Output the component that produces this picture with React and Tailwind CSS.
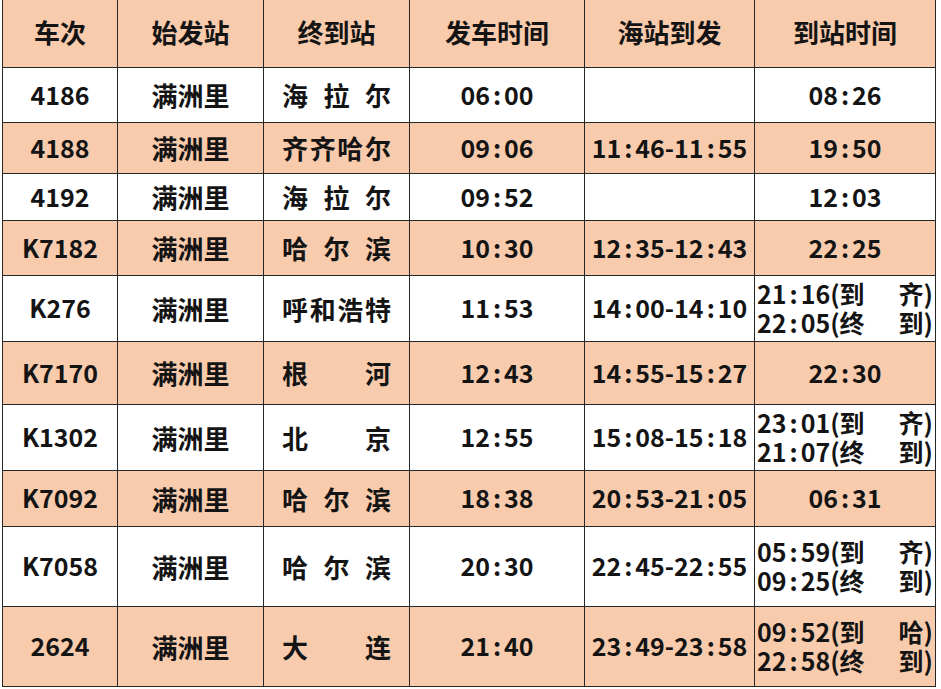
import React from "react";

const headers = ["车次", "始发站", "终到站", "发车时间", "海站到发", "到站时间"];
const widths = ["w-[115px]", "w-[146px]", "w-[146px]", "w-[175px]", "w-[170px]", "w-[181px]"];

// 到站时间: 字符串为单行，数组为两行（左右分散）
const rows = [
  { no: "4186", from: "满洲里", to: ["海", "拉", "尔"], dep: "06:00", hai: "", arr: "08:26", h: "h-[55px]" },
  { no: "4188", from: "满洲里", to: ["齐", "齐", "哈", "尔"], dep: "09:06", hai: "11:46-11:55", arr: "19:50", h: "h-[51px]" },
  { no: "4192", from: "满洲里", to: ["海", "拉", "尔"], dep: "09:52", hai: "", arr: "12:03", h: "h-[47px]" },
  { no: "K7182", from: "满洲里", to: ["哈", "尔", "滨"], dep: "10:30", hai: "12:35-12:43", arr: "22:25", h: "h-[55px]" },
  { no: "K276", from: "满洲里", to: ["呼", "和", "浩", "特"], dep: "11:53", hai: "14:00-14:10", arr: [["21:16(到", "齐)"], ["22:05(终", "到)"]], h: "h-[66px]" },
  { no: "K7170", from: "满洲里", to: ["根", "河"], dep: "12:43", hai: "14:55-15:27", arr: "22:30", h: "h-[63px]" },
  { no: "K1302", from: "满洲里", to: ["北", "京"], dep: "12:55", hai: "15:08-15:18", arr: [["23:01(到", "齐)"], ["21:07(终", "到)"]], h: "h-[66px]" },
  { no: "K7092", from: "满洲里", to: ["哈", "尔", "滨"], dep: "18:38", hai: "20:53-21:05", arr: "06:31", h: "h-[56px]" },
  { no: "K7058", from: "满洲里", to: ["哈", "尔", "滨"], dep: "20:30", hai: "22:45-22:55", arr: [["05:59(到", "齐)"], ["09:25(终", "到)"]], h: "h-[80px]" },
  { no: "2624", from: "满洲里", to: ["大", "连"], dep: "21:40", hai: "23:49-23:58", arr: [["09:52(到", "哈)"], ["22:58(终", "到)"]], h: "h-[80px]" },
];

const cell = "border border-[#262626] p-0 text-center align-middle";

// 冒号两侧留一点空隙，和原表的时间格式一致
function Time({ value }) {
  const parts = value.split(":");
  return (
    <>
      {parts.map((p, i) => (
        <React.Fragment key={i}>
          {i > 0 && <span className="mx-[3px]">:</span>}
          {p}
        </React.Fragment>
      ))}
    </>
  );
}

export default function App() {
  return (
    <div
      className="w-[941px] h-[689px] bg-white overflow-hidden pl-[2px] text-[#141414]"
      style={{ fontFamily: '"Noto Sans CJK SC", "Noto Sans", sans-serif' }}
    >
      <table className="table-fixed border-collapse w-[933px] border-t-0">
        <thead>
          <tr className="h-[67px] bg-[#f8cbad]">
            {headers.map((t, i) => (
              <th key={t} className={`${cell} border-t-0 ${widths[i]} text-[26px] font-bold pb-[4px]`}>
                {t}
              </th>
            ))}
          </tr>
        </thead>
        <tbody>
          {rows.map((r, idx) => (
            <tr key={r.no} className={`${r.h} ${idx % 2 === 1 ? "bg-[#f8cbad]" : "bg-white"}`}>
              <td className={`${cell} text-[25px] font-bold`}>{r.no}</td>
              <td className={`${cell} text-[26px] font-bold`}>{r.from}</td>
              <td className={`${cell} text-[26px] font-bold`}>
                <div className="flex justify-between px-[18px]">
                  {r.to.map((c, i) => (
                    <span key={i}>{c}</span>
                  ))}
                </div>
              </td>
              <td className={`${cell} text-[25px] font-bold`}>
                <Time value={r.dep} />
              </td>
              <td className={`${cell} text-[25px] font-bold`}>{r.hai && <Time value={r.hai} />}</td>
              <td className={`${cell} text-[25px] font-bold`}>
                {Array.isArray(r.arr) ? (
                  <div className="flex flex-col leading-[29px] px-[2px]">
                    {r.arr.map((line, i) => (
                      <div key={i} className="flex justify-between">
                        <span>
                          <Time value={line[0]} />
                        </span>
                        <span>{line[1]}</span>
                      </div>
                    ))}
                  </div>
                ) : (
                  <Time value={r.arr} />
                )}
              </td>
            </tr>
          ))}
        </tbody>
      </table>
    </div>
  );
}
